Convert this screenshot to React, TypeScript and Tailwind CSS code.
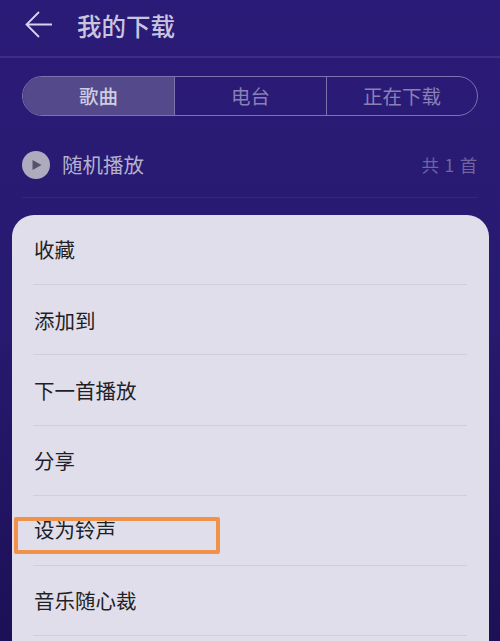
const font = { fontFamily: '"Noto Sans CJK SC", "Liberation Sans", sans-serif' }
const items = ['收藏', '添加到', '下一首播放', '分享', '设为铃声', '音乐随心裁']

export default function App() {
  return (
    <div
      className="relative w-[500px] h-[641px] overflow-hidden bg-gradient-to-b from-[#2b1b78] via-[#271a70] to-[#1c1056]"
      style={font}
    >
      {/* Header */}
      <div className="flex items-center h-[58px] pl-[25px] border-b-2 border-[#3d2f86]">
        <svg viewBox="0 0 28 28" className="w-[28px] h-[28px] -mt-[6px] text-[#d8d4e8]" fill="none" stroke="currentColor" strokeWidth="1.8">
          <path d="M27 13.5 H2 M14 1 L1.5 13.5 L14 26" />
        </svg>
        <h1 className="ml-[24px] -mt-[4px] text-[24.5px] leading-none font-medium text-[#c9c5de]">我的下载</h1>
      </div>

      {/* Tabs */}
      <div className="flex mx-[22px] mt-[18px] h-[40px] rounded-full border border-[#7d72ad] overflow-hidden text-[19.5px]">
        <div className="flex items-center justify-center w-[151px] bg-[#544a8b] font-medium text-[#d0cce2]">歌曲</div>
        <div className="flex items-center justify-center w-[152px] border-l border-[#7d72ad] text-[#8a80b6]">电台</div>
        <div className="flex items-center justify-center flex-1 border-l border-[#7d72ad] text-[#8a80b6]">正在下载</div>
      </div>

      {/* Shuffle row */}
      <div className="flex items-center justify-between mx-[22px] mt-[21px] h-[61px] pb-[1px] border-b border-[#33267c]">
        <div className="flex items-center gap-[12px] -mt-[4px]">
          <span className="flex items-center justify-center w-[28px] h-[28px] rounded-full bg-[#aeabbf]">
            <svg viewBox="0 0 12 12" className="w-[12px] h-[12px] ml-[1px]">
              <path d="M1.5 1 L10.5 6 L1.5 11 Z" fill="#55516b" />
            </svg>
          </span>
          <span className="text-[20.5px] leading-none text-[#b5b1cc]">随机播放</span>
        </div>
        <span className="-mt-[4px] text-[17.5px] leading-none tracking-[0.8px] text-[#6f659f]">共 1 首</span>
      </div>

      {/* Bottom sheet */}
      <div className="mx-[12px] mt-[17px] w-[477px] h-[500px] rounded-t-[22px] bg-[#e0deea] pl-[21px] pr-[22px]">
        {items.map(item => (
          <div key={item} className="flex items-center h-[70.2px] border-b border-[#d0cedb]">
            <span className={`ml-[1px] text-[20.5px] leading-none text-[#1f1f26] ${item === '设为铃声' ? '-mt-[3px]' : ''}`}>{item}</span>
          </div>
        ))}
      </div>

      {/* Annotation box */}
      <div className="absolute left-[14px] top-[517px] w-[206px] h-[37px] rounded-[2px] border-[4px] border-[#f0924a]" />
    </div>
  )
}
